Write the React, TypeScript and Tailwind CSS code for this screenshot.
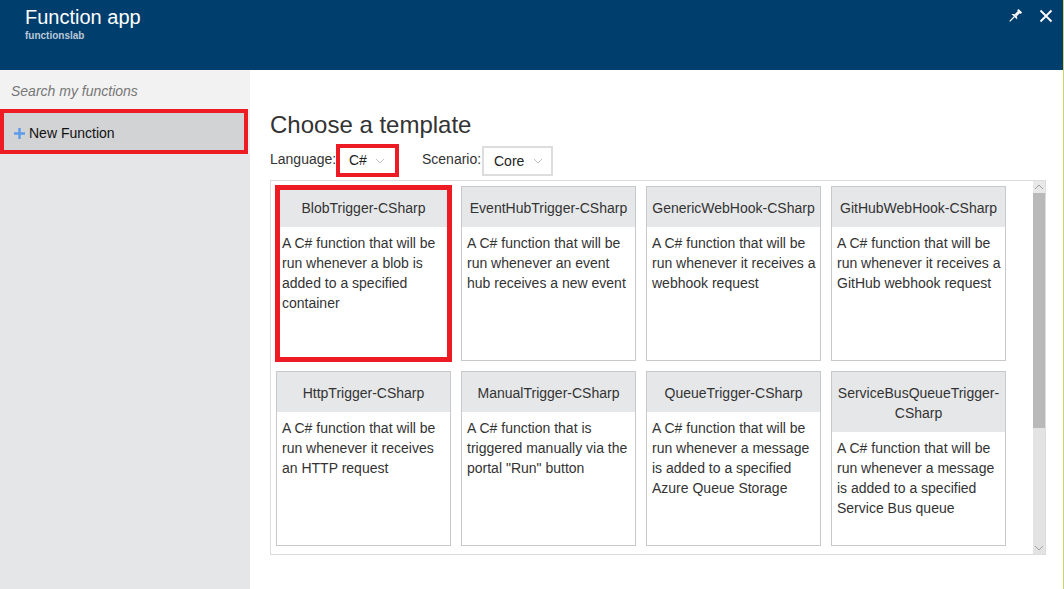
import React from 'react'

const templates = [
  {
    title: ['BlobTrigger-CSharp'],
    lines: ['A C# function that will be', 'run whenever a blob is', 'added to a specified', 'container'],
    selected: true,
  },
  {
    title: ['EventHubTrigger-CSharp'],
    lines: ['A C# function that will be', 'run whenever an event', 'hub receives a new event'],
  },
  {
    title: ['GenericWebHook-CSharp'],
    lines: ['A C# function that will be', 'run whenever it receives a', 'webhook request'],
  },
  {
    title: ['GitHubWebHook-CSharp'],
    lines: ['A C# function that will be', 'run whenever it receives a', 'GitHub webhook request'],
  },
  {
    title: ['HttpTrigger-CSharp'],
    lines: ['A C# function that will be', 'run whenever it receives', 'an HTTP request'],
  },
  {
    title: ['ManualTrigger-CSharp'],
    lines: ['A C# function that is', 'triggered manually via the', 'portal "Run" button'],
  },
  {
    title: ['QueueTrigger-CSharp'],
    lines: ['A C# function that will be', 'run whenever a message', 'is added to a specified', 'Azure Queue Storage'],
  },
  {
    title: ['ServiceBusQueueTrigger-', 'CSharp'],
    lines: ['A C# function that will be', 'run whenever a message', 'is added to a specified', 'Service Bus queue'],
  },
]

const Chevron = ({ up = false }: { up?: boolean }) => (
  <svg width="10" height="6" viewBox="0 0 10 6" className={up ? 'rotate-180' : ''}>
    <path d="M1 1 L5 5 L9 1" fill="none" stroke="currentColor" strokeWidth="1" />
  </svg>
)

const App = () => {
  return (
    <div
      className="w-[1064px] h-[589px] flex flex-col overflow-hidden bg-white border-r border-[#cdd46c]"
      style={{ fontFamily: '"Segoe UI", "Liberation Sans", Arial, sans-serif' }}
    >
      {/* blade header */}
      <header className="h-[70px] shrink-0 bg-[#003e6e] flex items-start justify-between pl-[25px] pr-[10px]">
        <div className="pt-[4px]">
          <div className="text-[20px] leading-[26px] text-white font-light">Function app</div>
          <div className="text-[10px] leading-[12px] font-bold text-[#b8c8d8]">functionslab</div>
        </div>
        <div className="flex items-center gap-[16px] pt-[8px] text-white">
          <svg width="16" height="16" viewBox="0 0 16 16">
            <g transform="rotate(45 8 8)" fill="white">
              <rect x="5.5" y="0.5" width="5" height="2" />
              <rect x="6.5" y="2" width="3" height="5" />
              <path d="M4 9 L12 9 L10 7 L6 7 Z" />
              <rect x="7.4" y="9" width="1.2" height="6.5" />
            </g>
          </svg>
          <svg width="14" height="14" viewBox="0 0 14 14">
            <path d="M1.5 1.5 L12.5 12.5 M12.5 1.5 L1.5 12.5" stroke="white" strokeWidth="1.8" />
          </svg>
        </div>
      </header>

      <div className="flex flex-1 min-h-0">
        {/* sidebar */}
        <aside className="w-[250px] shrink-0 bg-[#e5e6e8] flex flex-col">
          <div className="h-[39px] bg-[#f2f2f2] pl-[11px] flex items-center pt-[3px]">
            <span className="italic text-[14px] text-[#777777]">Search my functions</span>
          </div>
          <div className="bg-[#f2f2f2]">
            <div className="w-[248px] h-[45px] border-[4px] border-[#ed1c24] bg-[#d2d3d5] flex items-center pl-[10px] pt-[3px] gap-[4px]">
              <svg width="11" height="11" viewBox="0 0 11 11">
                <path d="M5.5 0 V11 M0 5.5 H11" stroke="#5b9bea" strokeWidth="2.4" />
              </svg>
              <span className="text-[14px] text-[#111111]">New Function</span>
            </div>
          </div>
        </aside>

        {/* main */}
        <main className="flex-1 pl-[20px] pt-[40px] text-[#333333]">
          <h1 className="text-[24px] leading-[30px] font-normal text-[#333333]">Choose a template</h1>

          <div className="flex items-center h-[33px] mt-[4px] text-[14px]">
            <span className="w-[66px] -mt-[2px]">Language:</span>
            <div className="w-[63px] h-[33px] border-[4px] border-[#ed1c24] flex items-center justify-between pl-[9px] pr-[10px]">
              <span className="text-[14px] text-[#222222]">C#</span>
              <span className="text-[#c0c0c0]">
                <Chevron />
              </span>
            </div>
            <span className="ml-[23px] w-[60px] -mt-[2px]">Scenario:</span>
            <div className="w-[71px] h-[30px] border-[2px] border-[#dddddd] flex items-center justify-between pl-[10px] pr-[8px] mt-[1px]">
              <span className="text-[14px] text-[#222222]">Core</span>
              <span className="text-[#c0c0c0]">
                <Chevron />
              </span>
            </div>
          </div>

          <div className="mt-[3px] w-[776px] h-[375px] border border-[#dcdcdc] flex">
            <div className="flex-1 pl-[5px] pt-[5px] overflow-hidden">
              <div className="grid grid-cols-[repeat(4,175px)] gap-x-[10px] gap-y-[10px]">
                {templates.map((t, i) => (
                  <div key={i} className="relative h-[175px] border border-[#c8c9cc] bg-white flex flex-col">
                    <div className="bg-[#e6e7e9] pt-[11px] pb-[9px] text-center text-[14px] leading-[20px] text-[#333333]">
                      {t.title.map((l, j) => (
                        <div key={j}>{l}</div>
                      ))}
                    </div>
                    <div className="pt-[6px] pl-[5px] text-[14px] leading-[20px] text-[#333333] whitespace-nowrap">
                      {t.lines.map((l, j) => (
                        <div key={j}>{l}</div>
                      ))}
                    </div>
                    {t.selected && (
                      <div className="absolute -inset-[2px] border-[5px] border-[#ed1c24]"></div>
                    )}
                  </div>
                ))}
              </div>
            </div>
            {/* scrollbar */}
            <div className="w-[12px] flex flex-col bg-[#e3e3e3]">
              <div className="h-[12px] bg-[#e8e8e8] flex items-center justify-center text-[#a0a0a0]">
                <Chevron up />
              </div>
              <div className="h-[235px] bg-[#b9b9b9]"></div>
              <div className="flex-1"></div>
              <div className="h-[12px] flex items-center justify-center text-[#a0a0a0]">
                <Chevron />
              </div>
            </div>
          </div>
        </main>
      </div>
    </div>
  )
}

export default App
